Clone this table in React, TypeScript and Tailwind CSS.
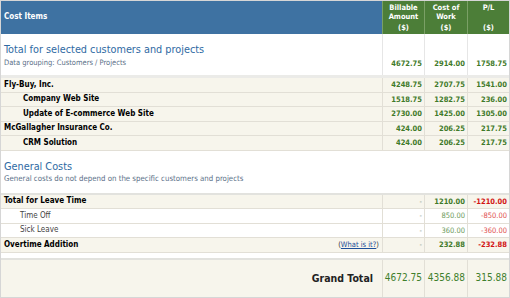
const FONT = "font-['DejaVu_Sans_Condensed','DejaVu_Sans',sans-serif]";

type Num = { v: string; tone: "g" | "lg" | "r" | "lr" | "dash" };

const toneCls: Record<Num["tone"], string> = {
  g: "text-[#3f7a2a] font-bold",
  lg: "text-[#6c9a5c]",
  r: "text-[#d21414] font-bold",
  lr: "text-[#e05050]",
  dash: "text-[#8a9a8a]",
};

function Cells({ nums, bg }: { nums: Num[]; bg: string }) {
  return (
    <>
      {nums.map((n, i) => (
        <div
          key={i}
          className={`${i === 1 ? "w-[43px]" : "w-[42px]"} shrink-0 border-l border-[#e2dfd6] ${bg} flex items-center justify-end pr-[2px] text-[7.5px] ${toneCls[n.tone]}`}
        >
          {n.v}
        </div>
      ))}
    </>
  );
}

function Row({
  label,
  nums,
  indent = false,
  bold = true,
  beige = true,
  extra,
}: {
  label: string;
  nums: Num[];
  indent?: boolean;
  bold?: boolean;
  beige?: boolean;
  extra?: React.ReactNode;
}) {
  const bg = beige ? "bg-[#f7f5ec]" : "bg-white";
  return (
    <div className="flex h-[14.5px] border-b border-[#e2dfd6]">
      <div
        className={`w-[381px] shrink-0 ${bg} flex items-center ${indent ? (bold ? "pl-[22px]" : "pl-[19px]") : "pl-[3px]"} pr-[3px] text-[8px] ${bold ? "font-bold text-black" : "text-[#444]"}`}
      >
        <span className="flex-1">{label}</span>
        {extra}
      </div>
      <Cells nums={nums} bg={bg} />
    </div>
  );
}

export default function App() {
  const g = (v: string): Num => ({ v, tone: "g" });
  return (
    <div className={`${FONT} w-[510px] h-[298px] bg-white`}>
      <div className="w-[510px] border border-[#d6d6d6] leading-none">
        {/* header */}
        <div className="flex h-[33px] bg-[#3e72a2] text-white font-bold text-[8px]">
          <div className="w-[381px] shrink-0 flex items-center pl-[3px] pb-[1px]">Cost Items</div>
          {[
            ["Billable", "Amount", "($)"],
            ["Cost of", "Work", "($)"],
            ["P/L", "", "($)"],
          ].map((h, i) => (
            <div
              key={i}
              className={`${i === 1 ? "w-[43px]" : "w-[42px]"} shrink-0 bg-[#4c7e38] border-l border-[#7aa066] flex flex-col items-center pt-[3px] gap-[1px] text-[7.5px]`}
            >
              <span className="h-[8px]">{h[0]}</span>
              <span className="h-[8px]">{h[1]}</span>
              <span className="mt-[2px]">{h[2]}</span>
            </div>
          ))}
        </div>

        {/* selected total */}
        <div className="flex h-[44px] border-b-[3px] border-[#ebebe8]">
          <div className="w-[381px] shrink-0 pl-[3px] pt-[11px]">
            <div className="text-[10.8px] text-[#2f6aa3]">Total for selected customers and projects</div>
            <div className="text-[7.5px] text-[#5b7088] mt-[3px]">Data grouping: Customers / Projects</div>
          </div>
          {[g("4672.75"), g("2914.00"), g("1758.75")].map((n, i) => (
            <div
              key={i}
              className={`${i === 1 ? "w-[43px]" : "w-[42px]"} shrink-0 border-l border-[#e6e6e6] flex items-end justify-end pr-[2px] pb-[8px] text-[7.5px] ${toneCls[n.tone]}`}
            >
              {n.v}
            </div>
          ))}
        </div>

        <Row label="Fly-Buy, Inc." nums={[g("4248.75"), g("2707.75"), g("1541.00")]} />
        <Row label="Company Web Site" indent nums={[g("1518.75"), g("1282.75"), g("236.00")]} />
        <Row label="Update of E-commerce Web Site" indent nums={[g("2730.00"), g("1425.00"), g("1305.00")]} />
        <Row label="McGallagher Insurance Co." nums={[g("424.00"), g("206.25"), g("217.75")]} />
        <Row label="CRM Solution" indent nums={[g("424.00"), g("206.25"), g("217.75")]} />

        {/* general costs */}
        <div className="h-[44px] pl-[3px] pt-[11px] border-b-2 border-[#e2e2de]">
          <div className="text-[10.8px] text-[#2f6aa3]">General Costs</div>
          <div className="text-[7.8px] text-[#5b7088] mt-[3px]">
            General costs do not depend on the specific customers and projects
          </div>
        </div>

        <Row
          label="Total for Leave Time"
          nums={[{ v: "-", tone: "dash" }, g("1210.00"), { v: "-1210.00", tone: "r" }]}
        />
        <Row
          label="Time Off"
          indent
          bold={false}
          beige={false}
          nums={[{ v: "-", tone: "dash" }, { v: "850.00", tone: "lg" }, { v: "-850.00", tone: "lr" }]}
        />
        <Row
          label="Sick Leave"
          indent
          bold={false}
          beige={false}
          nums={[{ v: "-", tone: "dash" }, { v: "360.00", tone: "lg" }, { v: "-360.00", tone: "lr" }]}
        />
        <Row
          label="Overtime Addition"
          nums={[{ v: "-", tone: "dash" }, g("232.88"), { v: "-232.88", tone: "r" }]}
          extra={
            <span className="font-normal text-[7.5px] text-[#333]">
              (<a href="#" className="text-[#1d4f9a] underline">What is it?</a>)
            </span>
          }
        />

        <div className="h-[7px] border-b-2 border-[#e2e2de]" />

        {/* grand total */}
        <div className="flex h-[37px] bg-[#f7f5ec]">
          <div className="w-[381px] shrink-0 flex items-center justify-end pr-[9px] text-[10.5px] font-bold text-[#222]">
            Grand Total
          </div>
          {["4672.75", "4356.88", "315.88"].map((v, i) => (
            <div
              key={i}
              className={`${i === 1 ? "w-[43px]" : "w-[42px]"} shrink-0 border-l border-[#e2dfd6] flex items-center justify-end pr-[2px] text-[10px] text-[#3f7f2c]`}
            >
              {v}
            </div>
          ))}
        </div>
      </div>
    </div>
  );
}
